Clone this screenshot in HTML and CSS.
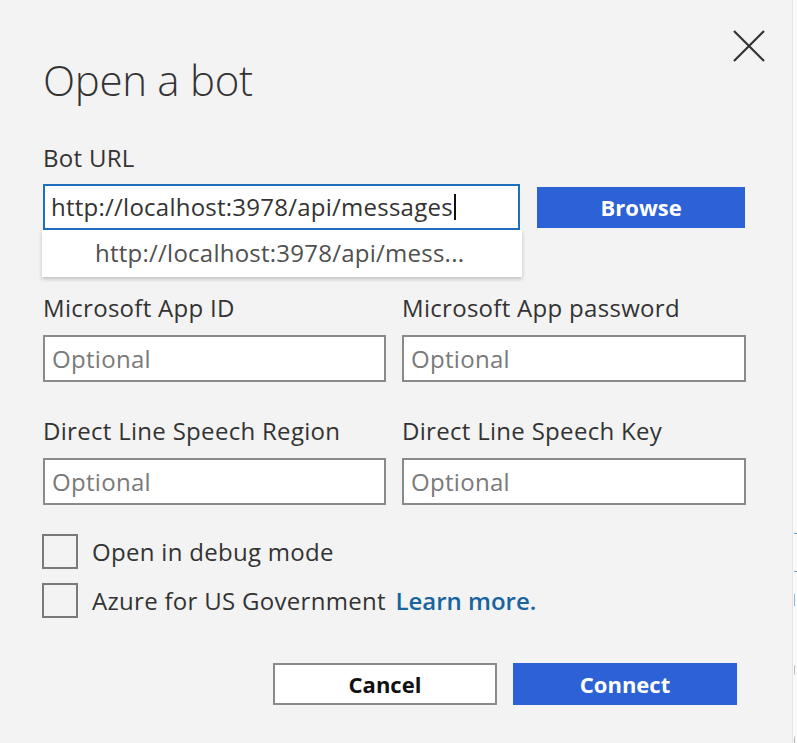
FILE: index.html
```html
<!DOCTYPE html>
<html lang="en">
<head>
<meta charset="utf-8">
<title>Open a bot</title>
<link rel="stylesheet" href="styles.css">
</head>
<body>
<div class="page">
  <div class="dialog">
    <button class="close" aria-label="Close">
      <svg width="32" height="32" viewBox="0 0 32 32"><path d="M1 1 L31 31 M31 1 L1 31" stroke="#333" stroke-width="2.2" fill="none"/></svg>
    </button>
    <h1 class="title">Open a bot</h1>

    <div class="label first">Bot URL</div>
    <div class="url-row">
      <div class="url-wrap">
        <div class="url-input"><span class="url-text">http://localhost:3978/api/messages</span><span class="caret"></span></div>
        <div class="suggest">http://localhost:3978/api/mess...</div>
      </div>
      <button class="btn primary browse">Browse</button>
    </div>

    <div class="fields">
      <div class="field">
        <div class="label">Microsoft App ID</div>
        <input class="input" type="text" placeholder="Optional">
      </div>
      <div class="field">
        <div class="label">Microsoft App password</div>
        <input class="input" type="text" placeholder="Optional">
      </div>
      <div class="field">
        <div class="label">Direct Line Speech Region</div>
        <input class="input" type="text" placeholder="Optional">
      </div>
      <div class="field">
        <div class="label">Direct Line Speech Key</div>
        <input class="input" type="text" placeholder="Optional">
      </div>
    </div>

    <div class="checks">
      <div class="check"><span class="box"></span><span class="check-text">Open in debug mode</span></div>
      <div class="check"><span class="box"></span><span class="check-text">Azure for US Government <a class="link" href="#">Learn more.</a></span></div>
    </div>

    <div class="actions">
      <button class="btn secondary">Cancel</button>
      <button class="btn primary">Connect</button>
    </div>
  </div>
  <div class="behind">
    <span class="bit b1"></span>
    <span class="bit b2"></span>
    <span class="bit b3"></span>
    <span class="bit b4"></span>
    <span class="bit b5"></span>
  </div>
</div>
</body>
</html>
```
FILE: styles.css
```css
* { box-sizing: border-box; }
html, body { margin: 0; padding: 0; }
body {
  background: #f9f9f9;
  font-family: "Open Sans", "Noto Sans", sans-serif;
  color: #333;
  width: 797px;
  height: 743px;
  overflow: hidden;
}
.page {
  display: flex;
  height: 743px;
}
.dialog {
  position: relative;
  width: 793px;
  height: 743px;
  background: #f3f3f3;
  border-right: 1px solid #e6e6e6;
  padding: 52px 47px 0 43px;
  display: flex;
  flex-direction: column;
}
.close {
  position: absolute;
  top: 30px;
  left: 733px;
  width: 32px;
  height: 32px;
  padding: 0;
  border: 0;
  background: transparent;
  display: flex;
}
.title {
  margin: 0;
  font-weight: 300;
  font-size: 42px;
  line-height: 56px;
  color: #333;
  letter-spacing: -0.3px;
}
.label {
  font-size: 24px;
  line-height: 32px;
  color: #333;
  letter-spacing: 0.3px;
}
.label.first { margin-top: 34px; }
.url-row {
  margin-top: 10px;
  display: flex;
  align-items: center;
  gap: 17px;
}
.url-wrap {
  position: relative;
  width: 478px;
}
.url-input {
  height: 46px;
  border: 2px solid #1f6fbf;
  background: #fff;
  padding: 0 6px;
  display: flex;
  align-items: center;
  font-size: 24px;
  line-height: 32px;
  color: #333;
  letter-spacing: 0.24px;
}
.caret {
  display: inline-block;
  width: 2px;
  height: 26px;
  background: #111;
  margin-left: 1px;
}
.suggest {
  position: absolute;
  top: 46px;
  left: -1px;
  width: 480px;
  height: 47px;
  background: #fff;
  box-shadow: 0 2px 4px rgba(0,0,0,0.22);
  padding: 7px 0 0 53px;
  font-size: 24px;
  line-height: 32px;
  color: #505050;
  letter-spacing: 0.24px;
  z-index: 2;
}
.btn {
  font-family: "Open Sans", "Noto Sans", sans-serif;
  font-weight: 700;
  font-size: 22px;
  height: 42px;
  width: 224px;
  padding: 0;
  cursor: pointer;
}
.primary {
  background: #2d62d7;
  color: #fff;
  border: 0;
}
.browse {
  width: 208px;
  height: 41px;
}
.secondary {
  background: #fff;
  color: #111;
  border: 2px solid #8a8a8a;
}
.fields {
  margin-top: 62px;
  display: grid;
  grid-template-columns: 343px 344px;
  column-gap: 16px;
  row-gap: 33px;
}
.field {
  display: flex;
  flex-direction: column;
  gap: 11px;
}
.input {
  height: 47px;
  width: 100%;
  border: 2px solid #8a8a8a;
  background: #fff;
  padding: 0 7px;
  font-family: "Open Sans", "Noto Sans", sans-serif;
  font-size: 24px;
  letter-spacing: 0.3px;
  color: #333;
  outline: none;
}
.input::placeholder { color: #7a7a7a; }
.checks {
  margin-top: 29px;
  display: flex;
  flex-direction: column;
  gap: 14px;
}
.check {
  display: flex;
  align-items: center;
  gap: 14px;
  margin-left: -1px;
}
.box {
  width: 36px;
  height: 35px;
  border: 2px solid #7a7a7a;
  background: transparent;
  flex: none;
}
.check-text {
  font-size: 24px;
  line-height: 32px;
  color: #333;
  letter-spacing: 0.3px;
}
.link {
  color: #17649f;
  font-weight: 600;
  text-decoration: none;
  letter-spacing: 0;
  margin-left: 3px;
}
.actions {
  margin-top: 45px;
  display: flex;
  justify-content: flex-end;
  gap: 16px;
  padding-right: 8px;
}
.behind {
  position: relative;
  flex: 1;
  height: 743px;
}
.bit {
  position: absolute;
  left: 1px;
  display: block;
}
.b1 { top: 533px; width: 3px; height: 1px; background: #6aa3d0; }
.b2 { top: 571px; width: 3px; height: 1px; background: #6aa3d0; }
.b3 { top: 594px; width: 1px; height: 12px; background: #8bb8dd; border-bottom: 1px solid #6aa3d0; }
.b4 { top: 665px; width: 2px; height: 10px; border-left: 1px solid #bbb; border-radius: 2px 0 0 2px; }
.b5 { top: 736px; width: 2px; height: 7px; border-left: 1px solid #bbb; border-radius: 2px 0 0 0; }
```
